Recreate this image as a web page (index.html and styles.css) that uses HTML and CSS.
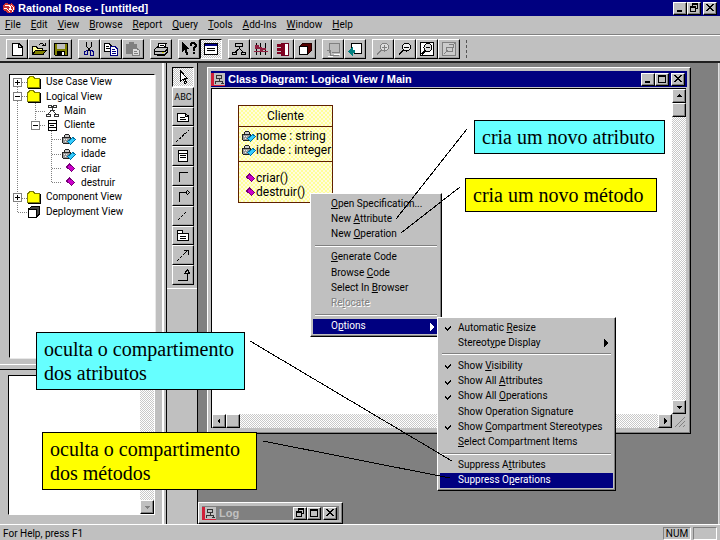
FILE: index.html
```html
<!DOCTYPE html>
<html lang="en">
<head>
<meta charset="utf-8">
<title>Rational Rose - [untitled]</title>
<link rel="stylesheet" href="styles.css">
</head>
<body>
<svg class="defs" aria-hidden="true">
  <symbol id="folder" viewBox="0 0 13 12"><path d="M.5 10.500V2.500L2.500.500H5.500L7.500 2.500H11.500V10.500Z" fill="#ff0" stroke="#808000"/><path d="M1 11.500H12.500V3" fill="none" stroke="#000"/></symbol>
  <symbol id="diagram" viewBox="0 0 13 13"><path d="M2.500 1.500H5.500V3.500H2.500ZM7.500 1.500H10.500V3.500H7.500ZM5 2.500H8M6.500 3V6M6.500 6L2.500 10M6.500 6L10.500 10M4 6.500H9" fill="none" stroke="#333"/><path d="M.5 10.500H4.500V12.500H.5ZM8.500 10.500H12.500V12.500H8.500Z" fill="#fff" stroke="#333"/></symbol>
  <symbol id="class" viewBox="0 0 13 13"><path d="M2.500 1.500H10.500V11.500H2.500ZM2.500 4.500H10.500M2.500 8.500H10.500M4.500 6.500H8.500" fill="#fff" stroke="#000"/></symbol>
  <symbol id="attr" viewBox="0 0 14 13"><path d="M2.500 5V2.500L3.500 1.500H6.500L7.500 2.500V5" fill="#ccc" stroke="#222"/><path d="M.5 4.500H8.500V10.500H1.500L.5 9.500Z" fill="#999" stroke="#222"/><path d="M2 6H3V7H2ZM4 6H5V7H4ZM3 8H4V9H3ZM5 8H6V9H5Z" fill="#eee"/><path d="M5.500 8.500L11 4.500L13.500 6.500L8.500 11.500Z" fill="#3cf" stroke="#0070a0"/></symbol>
  <symbol id="oper" viewBox="0 0 14 13"><path d="M4.500 5L7.500 2L12.500 6.500L9.500 9.500Z" fill="#c0c" stroke="#707"/></symbol>
  <symbol id="cube" viewBox="0 0 13 13"><path d="M.500 4.500L4 1.500H12V9L8.500 12.500" fill="#444" stroke="#000"/><rect x=".5" y="4.500" width="8" height="8" fill="#fff" stroke="#000"/></symbol>
  <symbol id="min" viewBox="0 0 12 10"><path d="M3 7H8V9H3Z"/></symbol>
  <symbol id="max" viewBox="0 0 12 10"><path d="M2 1H10V9H2ZM3 3V8H9V3Z" fill-rule="evenodd"/></symbol>
  <symbol id="restore" viewBox="0 0 12 10"><path d="M4 0H10V6H8V5H9V2H5V3H4ZM2 3H8V9H2ZM3 5V8H7V5Z" fill-rule="evenodd"/></symbol>
  <symbol id="close" viewBox="0 0 12 10"><path d="M2 1H4V2H5V3H7V2H8V1H10V2H9V3H8V4H7V5H8V6H9V7H10V8H8V7H7V6H5V7H4V8H2V7H3V6H4V5H5V4H4V3H3V2H2Z"/></symbol>
  <symbol id="rose" viewBox="0 0 14 14"><path d="M1 5Q3 0 7 3Q11 1 13 6Q14 10 9 12Q5 13 3 10Q0 9 1 5Z" fill="#c33"/><path d="M3 5L6 4L9 6L7 9L10 8M2 7L5 8L8 11M9 4L12 7L10 11" stroke="#fff" fill="none"/></symbol>
  <symbol id="doc" viewBox="0 0 14 13"><path d="M0 0H14V13H0Z" fill="#c0c0c0"/><path d="M0 0H3V13H0ZM0 12H14V13H0Z" fill="#d02038"/><path d="M5.500 2.500H10.500V5.500H5.500ZM8 6V8M4.500 11V8.500H11.500V11M10 10.500H13" fill="none" stroke="#333"/></symbol>
  <symbol id="tick" viewBox="0 0 8 8"><path d="M1 3V5L3 7L7 3V1L3 5Z"/></symbol>
</svg>

<div class="app">
  <header class="titlebar">
    <svg class="logo" width="14" height="14"><use href="#rose"/></svg>
    <h1>Rational Rose - [untitled]</h1>
    <div class="winbtns">
      <button aria-label="Minimize"><svg><use href="#min"/></svg></button><button aria-label="Restore"><svg><use href="#restore"/></svg></button><button class="x" aria-label="Close"><svg><use href="#close"/></svg></button>
    </div>
  </header>

  <nav class="menubar">
    <button><u>F</u>ile</button><button><u>E</u>dit</button><button><u>V</u>iew</button><button><u>B</u>rowse</button><button><u>R</u>eport</button><button><u>Q</u>uery</button><button><u>T</u>ools</button><button><u>A</u>dd-Ins</button><button><u>W</u>indow</button><button><u>H</u>elp</button>
  </nav>

  <div class="toolbar">
    <div class="group">
      <button aria-label="New"><svg viewBox="0 0 16 16"><path d="M3.500 2.500H10L13.500 6V14.500H3.500ZM9.500 2.500V6.500H13.500" fill="#fff" stroke="#000"/></svg></button>
      <button aria-label="Open"><svg viewBox="0 0 16 16"><path d="M1.500 13.500V5.500H5L6.500 7H11.500V9" fill="#ff9" stroke="#000"/><path d="M1.500 13.500L4.500 9.500H15L12 13.500Z" fill="#808000" stroke="#000"/><path d="M8 3.500Q11 1 13 4M11 4.500H14.500V1.500" fill="none" stroke="#000"/></svg></button>
      <button aria-label="Save"><svg viewBox="0 0 16 16"><path d="M1.500 2.500H14.500V14.500H2.500L1.500 13.500Z" fill="#808000" stroke="#000"/><path d="M4 3H12V8H4Z" fill="#c0c0c0"/><path d="M4 10H12V15H4Z"/><path d="M9 11H11V14H9Z" fill="#fff"/></svg></button>
    </div>
    <div class="group">
      <button aria-label="Cut"><svg viewBox="0 0 16 16"><path d="M5.500 1V5L9 10M10.500 1V5L7 10" fill="none" stroke="#000"/><path d="M6.500 9.500V13.500H3.500V10.500ZM9.500 9.500H11.500L12.500 11.500V14.500H9.500Z" fill="none" stroke="#000080"/></svg></button>
      <button aria-label="Copy"><svg viewBox="0 0 16 16"><path d="M1.500 2.500H6L8.500 5V10.500H1.500ZM3 5.500H6M3 7.500H7" fill="#fff" stroke="#000"/><path d="M7.500 5.500H12L14.500 8V14.500H7.500ZM9 8.500H12M9 10.500H13M9 12.500H13" fill="#fff" stroke="#000080"/></svg></button>
      <button aria-label="Paste" disabled><svg viewBox="0 0 16 16"><path d="M1 3H4V1H9V3H12V13H1Z" fill="#808080"/><path d="M7.500 7.500H12L14.500 9.500V14.500H7.500ZM9 10.500H12M9 12.500H13" fill="#ddd" stroke="#808080"/></svg></button>
    </div>
    <div class="group">
      <button aria-label="Print"><svg viewBox="0 0 16 16"><path d="M4.500 7L6 2.500H13L11.500 7" fill="#fff" stroke="#000"/><path d="M7 4.500H11M1.500 8.500L3.500 6.500H14.500V11L12 13.500H1.500ZM2 10.500H12L14 8.500" fill="#c0c0c0" stroke="#000"/><path d="M3.500 14.500H11.500L13.500 12.500" fill="none" stroke="#000"/><path d="M9 11.500H11" stroke="#cc0"/></svg></button>
    </div>
    <div class="group">
      <button aria-label="Context help"><svg viewBox="0 0 16 16"><path d="M1 1V11L3.500 9L5.500 14L7.500 13L5.500 8H9Z"/><path d="M9.500 5V3.500L11 2H13L14.500 3.500V5.500L12.500 7.500V9.500M12.500 11V13" fill="none" stroke="#000" stroke-width="2"/></svg></button>
      <button class="on" aria-label="View documentation"><svg viewBox="0 0 16 16"><path d="M1.500 2.500H14.500V13.500H1.500Z" fill="#fff" stroke="#000"/><path d="M2 3H14V5H2Z" fill="#000080"/><path d="M4 7.500H12M4 9.500H12" stroke="#000"/></svg></button>
    </div>
    <div class="group">
      <button aria-label="Browse class diagram"><svg viewBox="0 0 16 16"><path d="M4.500 2.500H11.500V5.500H4.500ZM8.500 5.500V7.500L3.500 11.500M8.500 7.500L12.500 11.500M1.500 11.500H5.500V13.500H1.500ZM10.500 11.500H14.500V13.500H10.500Z" fill="none" stroke="#000"/></svg></button>
      <button aria-label="Browse interaction diagram"><svg viewBox="0 0 16 16"><path d="M3.500 2V14M7.500 2V14M12.500 2V14" stroke="#000"/><path d="M2 4H6V6H9V7H13V9H10V10H7V8H2Z" fill="#902040"/><path d="M1 10.500H15" stroke="#902040"/></svg></button>
      <button aria-label="Browse component diagram"><svg viewBox="0 0 16 16"><path d="M6.500 2.500H13.500V14.500H6.500Z" fill="#fff" stroke="#700020"/><path d="M7 3H10V14H7ZM2 3H9V6H2ZM2 7H9V10H2ZM2 11H9V13H2Z" fill="#800020"/></svg></button>
      <button aria-label="Browse deployment diagram"><svg viewBox="0 0 16 16"><path d="M2.500 5.500L5.500 2.500H14V10L10.500 13.500" fill="#500" stroke="#200"/><path d="M2.500 5.500H10.500V13.500H2.500Z" fill="#fff" stroke="#000"/></svg></button>
    </div>
    <div class="group">
      <button aria-label="Browse parent" disabled><svg viewBox="0 0 16 16"><path d="M4.500 9V2.500H14.500V11.500H7" fill="#bbb" stroke="#808080"/><path d="M2 9H5V14H14M4 8V12" fill="none" stroke="#808080"/><path d="M3 15H8M9 13H15" stroke="#fff"/></svg></button>
      <button aria-label="Browse previous"><svg viewBox="0 0 16 16"><path d="M4.500 8V2.500H14.500V12.500H7" fill="#fff" stroke="#000"/><path d="M1 10.500L6 6V9H8V12H6V15Z" fill="#008080"/></svg></button>
    </div>
    <div class="group">
      <button aria-label="Zoom in" disabled><svg viewBox="0 0 16 16"><circle cx="9.500" cy="6" r="4" fill="#ddd" stroke="#808080"/><path d="M7 6H12M9.500 3.500V8.500" stroke="#808080"/><path d="M6.500 9L2 13.500" stroke="#808080" stroke-width="2"/></svg></button>
      <button aria-label="Zoom out"><svg viewBox="0 0 16 16"><circle cx="9.500" cy="6" r="4" fill="#eee" stroke="#000"/><path d="M7 6H12" stroke="#000"/><path d="M6.500 9L2 13.500" stroke="#000" stroke-width="2"/></svg></button>
      <button aria-label="Fit in window"><svg viewBox="0 0 16 16"><path d="M1.500 1.500H14.500V14.500H1.500Z" fill="#fff" stroke="#000"/><circle cx="9" cy="6.500" r="4" fill="#ddd" stroke="#000"/><path d="M7 6.500H11" stroke="#000"/><path d="M6.500 9.500L2.500 13.500" stroke="#000" stroke-width="2"/></svg></button>
      <button aria-label="Undo fit" disabled><svg viewBox="0 0 16 16"><path d="M1.500 1.500H14.500V14.500H1.500Z" fill="#ccc" stroke="#808080"/><path d="M5 6.500H11V10.500H5ZM8 4L13 3L12 7M3 13L7 9" fill="none" stroke="#808080"/></svg></button>
    </div>
    <span class="bar-end"></span>
  </div>

  <main class="work">
    <aside class="side">
      <section class="browser">
        <div class="tree">
          <svg class="guides" viewBox="0 0 144 144"><path d="M7.500 8V138M7.500 7.500H18M7.500 21.500H18M7.500 123.500H18M7.500 137.500H18M25.500 28V50M25.500 36.500H35M25.500 50.500H35M41.500 56V108M41.500 64.500H52M41.500 79.500H52M41.500 93.500H52M41.500 107.500H52"/></svg>
          <ul>
            <li><button class="exp" aria-label="Expand Use Case View"><svg viewBox="0 0 9 9"><path d="M.5.500H8.500V8.500H.5Z" fill="#fff" stroke="#808080"/><path d="M2 4.500H7M4.500 2V7" stroke="#000"/></svg></button><svg><use href="#folder"/></svg><span>Use Case View</span></li>
            <li><button class="exp" aria-label="Collapse Logical View"><svg viewBox="0 0 9 9"><path d="M.5.500H8.500V8.500H.5Z" fill="#fff" stroke="#808080"/><path d="M2 4.500H7" stroke="#000"/></svg></button><svg><use href="#folder"/></svg><span>Logical View</span></li>
            <li class="l1"><i class="exp"></i><svg><use href="#diagram"/></svg><span>Main</span></li>
            <li class="l1"><button class="exp" aria-label="Collapse Cliente"><svg viewBox="0 0 9 9"><path d="M.5.500H8.500V8.500H.5Z" fill="#fff" stroke="#808080"/><path d="M2 4.500H7" stroke="#000"/></svg></button><svg><use href="#class"/></svg><span>Cliente</span></li>
            <li class="l2"><i class="exp"></i><svg><use href="#attr"/></svg><span>nome</span></li>
            <li class="l2"><i class="exp"></i><svg><use href="#attr"/></svg><span>idade</span></li>
            <li class="l2"><i class="exp"></i><svg><use href="#oper"/></svg><span>criar</span></li>
            <li class="l2"><i class="exp"></i><svg><use href="#oper"/></svg><span>destruir</span></li>
            <li><button class="exp" aria-label="Expand Component View"><svg viewBox="0 0 9 9"><path d="M.5.500H8.500V8.500H.5Z" fill="#fff" stroke="#808080"/><path d="M2 4.500H7M4.500 2V7" stroke="#000"/></svg></button><svg><use href="#folder"/></svg><span>Component View</span></li>
            <li><i class="exp"></i><svg><use href="#cube"/></svg><span>Deployment View</span></li>
          </ul>
        </div>
      </section>
      <section class="docs">
        <div class="docbox">
          <div class="page"></div>
          <div class="vscroll"><button aria-label="Scroll up"><svg viewBox="0 0 12 12"><path d="M3 7H9L6 4Z" fill="#808080"/></svg></button><span class="space"></span><button aria-label="Scroll down"><svg viewBox="0 0 12 12"><path d="M3 5H9L6 8Z" fill="#808080"/></svg></button></div>
        </div>
      </section>
    </aside>

    <div class="palette">
      <div class="tools">
        <button class="on" aria-label="Select"><svg viewBox="0 0 18 16"><path d="M6.500 2V12L9 10L11 14.500L12.500 13.500L10.500 9.500H13.500Z" fill="#fff" stroke="#000"/></svg></button>
        <button class="abc">ABC</button>
        <button aria-label="Note"><svg viewBox="0 0 18 16"><path d="M3.500 4.500H11.500L14.500 7V12.500H3.500ZM11.500 4.500V7.500H14.500M5.500 8.500H11M5.500 10.500H12" fill="#fff" stroke="#000"/></svg></button>
        <button aria-label="Note anchor"><svg viewBox="0 0 18 16"><path d="M2 14L15 2" stroke="#000" stroke-dasharray="3 1"/></svg></button>
        <button aria-label="Class"><svg viewBox="0 0 18 16"><path d="M4.500 2.500H13.500V13.500H4.500ZM4.500 5.500H13.500M6 7.500H12M6 9.500H12" fill="#fff" stroke="#000"/></svg></button>
        <button aria-label="Association"><svg viewBox="0 0 18 16"><path d="M5.500 14V4.500H14" fill="none" stroke="#000"/></svg></button>
        <button aria-label="Aggregation"><svg viewBox="0 0 18 16"><path d="M5.500 14V4.500H12L13.500 2.500L15.500 4.500L13.500 6.500L12 4.500" fill="none" stroke="#000"/></svg></button>
        <button aria-label="Link attribute"><svg viewBox="0 0 18 16"><path d="M4 12L12 4" stroke="#000" stroke-dasharray="3 1"/></svg></button>
        <button aria-label="Package"><svg viewBox="0 0 18 16"><path d="M3.500 13.500V3.500H8.500V6.500H14.500V13.500ZM3.500 6.500H9M6 9.500H12M6 11.500H12" fill="#fff" stroke="#000"/></svg></button>
        <button aria-label="Dependency"><svg viewBox="0 0 18 16"><path d="M3 14L13 4" stroke="#000" stroke-dasharray="3 1"/><path d="M10 3.500H14.500V8" fill="none" stroke="#000"/></svg></button>
        <button aria-label="Generalization"><svg viewBox="0 0 18 16"><path d="M4 13.500H13.500V7M10.500 6.500L13.500 2.500L15.500 6.500Z" fill="none" stroke="#000"/></svg></button>
      </div>
    </div>

    <div class="mdi">
      <section class="window">
        <header class="titlebar">
          <svg class="logo" width="14" height="13"><use href="#doc"/></svg>
          <h2>Class Diagram: Logical View / Main</h2>
          <div class="winbtns">
            <button aria-label="Minimize"><svg><use href="#min"/></svg></button><button aria-label="Maximize"><svg><use href="#max"/></svg></button><button class="x" aria-label="Close"><svg><use href="#close"/></svg></button>
          </div>
        </header>
        <div class="client">
          <div class="canvas">
            <article class="uml">
              <h3>Cliente</h3>
              <div class="attrs"><p><svg><use href="#attr"/></svg>nome : string</p><p><svg><use href="#attr"/></svg>idade : integer</p></div>
              <div class="opers"><p><svg><use href="#oper"/></svg>criar()</p><p><svg><use href="#oper"/></svg>destruir()</p></div>
            </article>
          </div>
          <div class="vscroll"><button aria-label="Scroll up"><svg viewBox="0 0 12 12"><path d="M3 7H9L6 4Z"/></svg></button><span class="thumb"></span><span class="space"></span><button aria-label="Scroll down"><svg viewBox="0 0 12 12"><path d="M3 5H9L6 8Z"/></svg></button></div>
          <div class="hscroll"><button aria-label="Scroll left"><svg viewBox="0 0 12 12"><path d="M7 3V9L4 6Z"/></svg></button><span class="thumb"></span><span class="space"></span><button aria-label="Scroll right"><svg viewBox="0 0 12 12"><path d="M5 3V9L8 6Z"/></svg></button></div>
          <svg class="grip" viewBox="0 0 14 14"><path d="M3 13L13 3M7 13L13 7M11 13L13 11" stroke="#808080"/></svg>
        </div>
      </section>

      <section class="window log">
        <header class="titlebar">
          <svg class="logo" width="14" height="13"><use href="#doc"/></svg>
          <h2>Log</h2>
          <div class="winbtns">
            <button aria-label="Restore"><svg><use href="#restore"/></svg></button><button aria-label="Maximize"><svg><use href="#max"/></svg></button><button class="x" aria-label="Close"><svg><use href="#close"/></svg></button>
          </div>
        </header>
      </section>
    </div>
  </main>

  <footer class="status"><span>For Help, press F1</span><span class="cell">NUM</span><span class="cell blank"></span></footer>

  <div class="popup context">
    <button><u>O</u>pen Specification...</button>
    <button>New <u>A</u>ttribute</button>
    <button>New <u>O</u>peration</button>
    <hr>
    <button><u>G</u>enerate Code</button>
    <button>Browse <u>C</u>ode</button>
    <button>Select In <u>B</u>rowser</button>
    <button disabled>Re<u>l</u>ocate</button>
    <hr>
    <button class="active">O<u>p</u>tions<svg class="arrow" viewBox="0 0 4 8"><path d="M0 0V8L4 4Z"/></svg></button>
  </div>

  <div class="popup submenu">
    <button><svg class="tick"><use href="#tick"/></svg>Automatic <u>R</u>esize</button>
    <button>Stereot<u>y</u>pe Display<svg class="arrow" viewBox="0 0 4 8"><path d="M0 0V8L4 4Z"/></svg></button>
    <hr>
    <button><svg class="tick"><use href="#tick"/></svg>Show <u>V</u>isibility</button>
    <button><svg class="tick"><use href="#tick"/></svg>Show All <u>A</u>ttributes</button>
    <button><svg class="tick"><use href="#tick"/></svg>Show All <u>O</u>perations</button>
    <button>Show Operation Si<u>g</u>nature</button>
    <button><svg class="tick"><use href="#tick"/></svg>Show <u>C</u>ompartment Stereotypes</button>
    <button><u>S</u>elect Compartment Items</button>
    <hr>
    <button>Suppress A<u>t</u>tributes</button>
    <button class="active">Suppress O<u>p</u>erations</button>
  </div>

  <p class="note n1">cria um novo atributo</p>
  <p class="note yellow n2">cria um novo método</p>
  <p class="note n3">oculta o compartimento<br>dos atributos</p>
  <p class="note yellow n4">oculta o compartimento<br>dos métodos</p>
  <svg class="leaders" width="720" height="540" viewBox="0 0 720 540" aria-hidden="true"><path d="M467 129L396 219M460 187L401 233M250 341L452 461M263 441L450 478"/></svg>
</div>
</body>
</html>
```
FILE: styles.css
```css
* { box-sizing: border-box; }

body {
  margin: 0;
  background: #c0c0c0;
  color: #000;
  font: 10px/12px Roboto, "Liberation Sans", Arial, sans-serif;
}

h1, h2, h3, p, ul { margin: 0; padding: 0; font-weight: normal; }
ul { list-style: none; }
svg { display: block; flex: none; shape-rendering: crispEdges; }
.defs { position: absolute; width: 0; height: 0; }

button {
  margin: 0;
  padding: 0;
  border: 0;
  background: none;
  color: inherit;
  font: inherit;
  text-align: left;
}

.app {
  position: relative;
  display: flex;
  flex-direction: column;
  min-height: 100vh;
  overflow: hidden;
}

/* title bars */
.titlebar {
  display: flex;
  align-items: center;
  gap: 2px;
  height: 16px;
  padding: 0 3px 0 2px;
  background: #000080;
  color: #fff;
}
.titlebar h1, .titlebar h2 {
  flex: 1;
  font: bold 11px/14px "Liberation Sans", Arial, sans-serif;
  white-space: nowrap;
}
.winbtns { display: flex; }
.winbtns button, .vscroll button, .hscroll button, .thumb {
  width: 14px;
  height: 13px;
  background: #c0c0c0;
  border: 1px solid;
  border-color: #fff #000 #000 #fff;
  box-shadow: inset -1px -1px #808080;
}
.winbtns svg { width: 12px; height: 10px; }
.winbtns .x { margin-left: 2px; }

/* menu bar and toolbar */
.menubar {
  display: flex;
  height: 19px;
  align-items: center;
  border-bottom: 1px solid #808080;
}
.menubar button { padding: 0 5px; line-height: 14px; }

.toolbar {
  display: flex;
  align-items: center;
  gap: 6px;
  height: 28px;
  padding-left: 6px;
  border-top: 1px solid #fff;
  border-bottom: 2px solid #202020;
}
.group { display: flex; }
.group button, .tools button {
  display: flex;
  align-items: center;
  justify-content: center;
  width: 22px;
  height: 20px;
  border: 1px solid;
  border-color: #fff #000 #000 #fff;
  box-shadow: inset -1px -1px #a0a0a0;
}
.group svg { width: 16px; height: 16px; }
.group .on, .tools .on {
  border-color: #000 #fff #fff #000;
  box-shadow: none;
  background: repeating-conic-gradient(#fff 0 25%, #c0c0c0 0 50%) 0 0 / 2px 2px;
}
.bar-end { height: 18px; border-left: 1px dashed #555; }

/* work area */
.work { flex: 1; display: flex; }
.side {
  display: flex;
  flex-direction: column;
  width: 164px;
  border-right: 2px solid #fff;
}
.browser {
  flex: 1;
  display: flex;
  padding: 11px 7px 6px 9px;
  border-bottom: 1px solid #fff;
}
.tree {
  position: relative;
  flex: 1;
  background: #fff;
  border: 1px solid;
  border-color: #000 #fff #fff #000;
  box-shadow: 1px 1px #e8e8e8;
}
.guides { position: absolute; left: 0; top: 0; width: 144px; height: 144px; }
.guides path { fill: none; stroke: #808080; stroke-dasharray: 1 1; }
.tree ul { position: relative; display: grid; grid-template-rows: repeat(10, 1fr); height: 144px; }
.tree li { display: flex; align-items: center; gap: 5px; padding-left: 3px; white-space: nowrap; }
.tree li > svg { width: 14px; height: 13px; }
.tree .l1 { padding-left: 21px; }
.tree .l2 { padding-left: 38px; }
.exp, .exp svg { width: 9px; height: 9px; }

.docs {
  display: flex;
  height: 155px;
  margin-top: 4px;
  padding: 5px 7px 9px 8px;
  border-top: 1px solid #000;
}
.docbox {
  flex: 1;
  display: flex;
  background: #fff;
  border: 1px solid;
  border-color: #000 #fff #fff #000;
}
.page { flex: 1; }
.vscroll, .hscroll {
  display: flex;
  background: repeating-conic-gradient(#fff 0 25%, #c8c8c8 0 50%) 0 0 / 2px 2px;
}
.vscroll { flex-direction: column; width: 14px; }
.vscroll button, .hscroll button, .thumb { height: 14px; }
.vscroll svg, .hscroll svg { width: 12px; height: 12px; }
.space { flex: 1; }

.palette {
  width: 32px;
  margin-left: 2px;
  padding: 4px 3px 0 5px;
  border-left: 1px solid #000;
  border-right: 1px solid #000;
}
.palette::after {
  content: "";
  display: block;
  margin: 3px -3px 0 -5px;
  border-top: 1px solid #fff;
}
.tools { display: flex; flex-direction: column; height: 218px; }
.tools button { flex: 1; }
.tools svg { width: 18px; height: 16px; }
.tools .abc { font-size: 9px; }

.mdi {
  position: relative;
  flex: 1;
  margin-right: 1px;
  background: #808080;
  border-right: 1px solid #e0e0e0;
}

/* child windows */
.window {
  position: absolute;
  left: 9px;
  top: 4px;
  display: flex;
  flex-direction: column;
  width: 484px;
  height: 367px;
  padding: 3px 3px 5px;
  background: #c0c0c0;
  border: 1px solid;
  border-color: #fff #000 #000 #fff;
  box-shadow: inset -1px -1px #808080;
}
.window .titlebar { flex: none; gap: 3px; padding: 0 2px 0 0; }
.client {
  flex: 1;
  display: grid;
  grid-template: 1fr 14px / 1fr 14px;
  margin: 1px 1px 0 0;
  border-top: 1px solid #000;
  border-left: 1px solid #000;
}
.canvas { background: #fff; padding: 16px 26px; }
.grip { width: 14px; height: 14px; }

.uml {
  width: 95px;
  border: 1px solid #602000;
  background: repeating-conic-gradient(#ffff99 0 25%, #fffbe0 0 50%) 0 0 / 4px 4px;
  font-size: 12px;
  line-height: 14px;
}
.uml h3 { font-size: 12px; line-height: 19px; padding-top: 1px; text-align: center; }
.uml div { border-top: 1px solid #602000; }
.attrs { padding: 2px 0 4px 3px; }
.opers { padding: 9px 0 3px 3px; }
.uml p { display: flex; align-items: center; white-space: nowrap; }
.uml svg { width: 14px; height: 13px; }

.window.log { left: 0; top: auto; bottom: 0; width: 145px; height: 22px; padding: 3px; }
.log .titlebar { height: 14px; background: #808080; color: #c0c0c0; }

.status {
  display: flex;
  gap: 2px;
  height: 16px;
  padding: 2px 3px 0;
  border-top: 1px solid #fff;
  line-height: 14px;
}
.status span:first-child { flex: 1; }
.cell { width: 28px; text-align: center; border: 1px solid; border-color: #808080 #fff #fff #808080; line-height: 12px; }
.blank { width: 24px; }

/* popup menus */
.popup {
  position: absolute;
  display: flex;
  flex-direction: column;
  padding: 2px;
  background: #c0c0c0;
  border: 1px solid;
  border-color: #fff #000 #000 #fff;
  box-shadow: inset -1px -1px #808080;
}
.popup button { position: relative; flex: 1; padding-left: 18px; white-space: nowrap; }
.popup hr { width: calc(100% - 4px); margin: 3px 2px; border: 0; border-top: 1px solid #808080; border-bottom: 1px solid #fff; }
.popup button:disabled { color: #808080; text-shadow: 1px 1px #fff; }
.popup .active { background: #000080; color: #fff; }
.arrow { position: absolute; right: 5px; top: 4px; width: 4px; height: 8px; fill: currentColor; }
.tick { position: absolute; left: 4px; top: 4px; width: 8px; height: 8px; }
.context { left: 310px; top: 193px; width: 132px; height: 144px; }
.submenu { left: 437px; top: 317px; width: 179px; height: 174px; }

/* callouts */
.note {
  position: absolute;
  padding: 4px 7px;
  background: #66ffff;
  border: 1px solid #000;
  font: 20px/24px "Liberation Serif", "Times New Roman", serif;
  white-space: nowrap;
}
.note.yellow { background: #ff0; }
.n1 { left: 474px; top: 120px; width: 191px; }
.n2 { left: 465px; top: 178px; width: 192px; }
.n3 { left: 36px; top: 332px; width: 209px; }
.n4 { left: 42px; top: 432px; width: 215px; }
.leaders { position: absolute; left: 0; top: 0; pointer-events: none; }
.leaders path { stroke: #000; fill: none; }
```
